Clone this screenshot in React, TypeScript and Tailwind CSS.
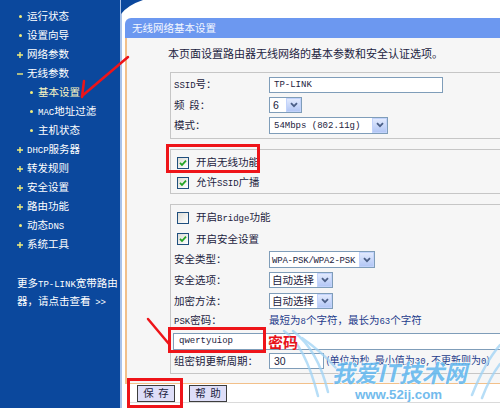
import React from 'react';

type Mk = 'dot' | 'plus' | 'minus';
type Item = { t: React.ReactNode; m: Mk; sub?: boolean; on?: boolean };

function L({ children }: { children: React.ReactNode }) {
  return <span className="font-['Liberation_Mono',monospace] text-[9px]">{children}</span>;
}

function Mark({ m }: { m: Mk }) {
  if (m === 'dot') return <span className="ml-[2px] w-[3px] h-[3px] rounded-full bg-[#f2ee7c]" />;
  return (
    <svg width="6" height="6" viewBox="0 0 6 6">
      <path d={m === 'plus' ? 'M0 3H6M3 0V6' : 'M0 3H6'} stroke="#f2ee7c" strokeWidth="1.4" />
    </svg>
  );
}

const menu: Item[] = [
  { t: '运行状态', m: 'dot' },
  { t: '设置向导', m: 'dot' },
  { t: '网络参数', m: 'plus' },
  { t: '无线参数', m: 'minus' },
  { t: '基本设置', m: 'dot', sub: true, on: true },
  { t: <><L>MAC</L>地址过滤</>, m: 'dot', sub: true },
  { t: '主机状态', m: 'dot', sub: true },
  { t: <><L>DHCP</L>服务器</>, m: 'plus' },
  { t: '转发规则', m: 'plus' },
  { t: '安全设置', m: 'plus' },
  { t: '路由功能', m: 'plus' },
  { t: <>动态<L>DNS</L></>, m: 'dot' },
  { t: '系统工具', m: 'plus' },
];

function Check({ on }: { on?: boolean }) {
  return (
    <span className="w-[12px] h-[12px] shrink-0 border border-[#1f4f7e] bg-linear-to-br from-[#dcdcd6] to-white flex items-center justify-center">
      {on && (
        <svg width="8" height="8" viewBox="0 0 8 8">
          <path d="M1 3.8 L3 6 L7 1.6" stroke="#22a322" strokeWidth="1.8" fill="none" />
        </svg>
      )}
    </span>
  );
}

function Select({ w, h, pad = 'pl-[3px]', children }: { w: string; h: string; pad?: string; children: React.ReactNode }) {
  return (
    <div className={`${w} ${h} ${pad} shrink-0 flex items-center bg-white border border-[#7f9db9]`}>
      <span className="flex-1 whitespace-nowrap">{children}</span>
      <span className="w-[15px] shrink-0 h-full border border-[#c2d3fb] bg-linear-to-b from-[#e2eafd] to-[#b3c7f5] flex items-center justify-center">
        <svg width="8" height="6" viewBox="0 0 8 6">
          <path d="M1 1.2 L4 4.2 L7 1.2" stroke="#4b5f86" strokeWidth="1.8" fill="none" />
        </svg>
      </span>
    </div>
  );
}

function Row({ label, h, children }: { label: React.ReactNode; h: string; children?: React.ReactNode }) {
  return (
    <div className={`${h} flex items-center`}>
      <span className="w-[95px] shrink-0">{label}</span>
      {children}
    </div>
  );
}

export default function App() {
  return (
    <div className="relative w-[500px] h-[408px] overflow-hidden flex bg-white text-[10.5px] leading-none text-[#1c2340] font-['Noto_Sans_CJK_SC',sans-serif]">
      <aside className="w-[122px] shrink-0 h-full bg-[#0b489d] border-r-2 border-[#a8c2ea] pt-[7px] text-white">
        {menu.map((it, i) => (
          <div
            key={i}
            className={`h-[19px] flex items-center ${it.sub ? 'pl-[28px]' : 'pl-[17px]'} ${it.on ? 'text-[#fbf6c2]' : ''}`}
          >
            <span className="w-[10px] flex items-center">
              <Mark m={it.m} />
            </span>
            <span>{it.t}</span>
          </div>
        ))}
        <div className="mt-[21px] pl-[17px] leading-[15px] whitespace-nowrap">
          更多<L>TP-LINK</L>宽带路由
          <br />
          器，请点击查看&nbsp;&nbsp;<L>&gt;&gt;</L>
        </div>
      </aside>

      <main className="relative flex-1 min-w-0 pt-[18px] pl-[3px] flex flex-col">
        <div className="w-[440px] shrink-0">
          <div className="h-[20px] rounded-tl-[6px] bg-[#6c98f0] text-[#f4f7ff] pl-[7px] flex items-center">
            无线网络基本设置
          </div>
          <div className="bg-[#f6f6f6] border-l-2 border-b border-[#f2c08a] pl-[41px] pt-[8px] pb-[9px]">
            <p className="h-[14px] flex items-center text-[11px]">本页面设置路由器无线网络的基本参数和安全认证选项。</p>

            <section className="ml-[2px] mt-[12px] w-[360px] border border-[#c6c6c6] pt-[2px] pb-[3px] pl-[3px]">
              <Row h="h-[20px]" label={<><L>SSID</L>号：</>}>
                <div className="w-[174px] h-[16px] border border-[#7f9db9] bg-white pl-[4px] flex items-center">
                  <L>TP-LINK</L>
                </div>
              </Row>
              <Row h="h-[20px]" label={<>频&nbsp;&nbsp;段：</>}>
                <Select w="w-[33px]" h="h-[16px]">
                  <span className="font-['Liberation_Sans',sans-serif]">6</span>
                </Select>
              </Row>
              <Row h="h-[20px]" label="模式：">
                <Select w="w-[119px]" h="h-[17px]" pad="pl-[4px]">
                  <L>54Mbps (802.11g)</L>
                </Select>
              </Row>
            </section>

            <section className="ml-[2px] mt-[10px] w-[360px] border border-[#c6c6c6] pt-[2px] pl-[3px]">
              <div className="h-[21px] flex items-center pl-[3px]">
                <Check on />
                <span className="ml-[7px]">开启无线功能</span>
              </div>
              <div className="h-[20px] flex items-center pl-[3px]">
                <Check on />
                <span className="ml-[7px]">允许<L>SSID</L>广播</span>
              </div>
            </section>

            <section className="ml-[2px] mt-[10px] w-[360px] border border-[#c6c6c6] pt-[2px] pb-[2px] pl-[3px]">
              <div className="h-[21px] flex items-center pl-[3px]">
                <Check />
                <span className="ml-[7px]">开启<L>Bridge</L>功能</span>
              </div>
              <div className="h-[22px] flex items-center pl-[3px]">
                <Check on />
                <span className="ml-[7px]">开启安全设置</span>
              </div>
              <Row h="h-[19px]" label="安全类型：">
                <Select w="w-[106px]" h="h-[17px]" pad="pl-[2px]">
                  <span className="tracking-[-0.2px]">
                    <L>WPA-PSK/WPA2-PSK</L>
                  </span>
                </Select>
              </Row>
              <Row h="h-[22px]" label="安全选项：">
                <Select w="w-[64px]" h="h-[16px]" pad="pl-[2px]">自动选择</Select>
              </Row>
              <Row h="h-[20px]" label="加密方法：">
                <Select w="w-[64px]" h="h-[16px]" pad="pl-[2px]">自动选择</Select>
              </Row>
              <Row h="h-[20px]" label={<><L>PSK</L>密码：</>}>
                <span className="text-[#1e3c8c]">
                  最短为<L>8</L>个字符，最长为<L>63</L>个字符
                </span>
              </Row>
              <div className="h-[20px] flex items-center">
                <div className="-ml-[1px] w-[340px] h-[17px] border border-[#7f9db9] bg-white pl-[5px] flex items-center">
                  <L>qwertyuiop</L>
                </div>
              </div>
              <Row h="h-[20px]" label="组密钥更新周期：">
                <div className="w-[55px] h-[16px] border border-[#7f9db9] bg-white pl-[4px] flex items-center font-['Liberation_Sans',sans-serif]">
                  30
                </div>
                <span className="ml-[2px] text-[10px] text-[#1e3c8c] whitespace-nowrap">
                  (单位为秒<L>,</L>最小值为<L>30,</L>不更新则为<L>0</L>)
                </span>
              </Row>
            </section>
          </div>
        </div>

        <div className="mt-[1px] h-[17px] pl-[12px] flex gap-[14px]">
          <button className="w-[38px] h-[17px] bg-[#dedef8] border border-[#3d3d3d] text-[#1c2340] flex items-center justify-center">
            保&nbsp;&nbsp;存
          </button>
          <button className="w-[38px] h-[17px] bg-[#dedef8] border border-[#3d3d3d] text-[#1c2340] flex items-center justify-center">
            帮&nbsp;&nbsp;助
          </button>
        </div>
        <div className="ml-[2px] h-[1px] bg-[#dadada]" />
      </main>

      <div className="absolute inset-0 pointer-events-none">
        <svg className="absolute left-0 top-0" width="500" height="408" viewBox="0 0 500 408">
          <path d="M120 0 H143 Q128 5 121 14 V0 Z" fill="#0b489d" />
          <g fill="none" stroke="#9fd3f5" strokeWidth="2.5" opacity="0.75" strokeLinecap="round">
            <path d="M284 331 Q305 345 318 396" />
            <path d="M293 331 Q318 350 328 392" />
            <path d="M302 338 Q322 352 336 368" />
            <path d="M500 345 Q485 362 472 395" />
            <path d="M500 364 Q490 377 482 398" />
          </g>
          <text
            x="332"
            y="382"
            fontSize="24"
            fontWeight="bold"
            fontStyle="italic"
            fill="#5fb6ee"
            stroke="#ffffff"
            strokeWidth="1.2"
            paintOrder="stroke"
            opacity="0.85"
            textLength="135"
            lengthAdjust="spacingAndGlyphs"
            fontFamily="Noto Sans CJK SC, sans-serif"
          >
            我爱IT技术网
          </text>
          <text
            x="355"
            y="399"
            fontSize="12"
            fontWeight="bold"
            fill="#5ab0ea"
            opacity="0.85"
            textLength="87"
            lengthAdjust="spacingAndGlyphs"
            fontFamily="Liberation Sans, sans-serif"
          >
            www.52ij.com
          </text>
          <g stroke="#ee1419" strokeWidth="2.5" strokeLinecap="round" fill="none">
            <path d="M128 57 L82 96" />
            <path d="M84 81 L82 97" />
            <path d="M148 319 L169 344" />
          </g>
        </svg>
        <div className="absolute left-[166px] top-[144px] w-[94px] h-[29px] border-[3px] border-[#ee1419]" />
        <div className="absolute left-[168px] top-[327px] w-[98px] h-[26px] border-[3px] border-[#ee1419]" />
        <div className="absolute left-[127px] top-[378px] w-[56px] h-[30px] border-[3px] border-[#ee1419]" />
        <span className="absolute left-[268px] top-[334px] text-[15px] leading-none font-bold text-[#e8121a]">密码</span>
      </div>
    </div>
  );
}
